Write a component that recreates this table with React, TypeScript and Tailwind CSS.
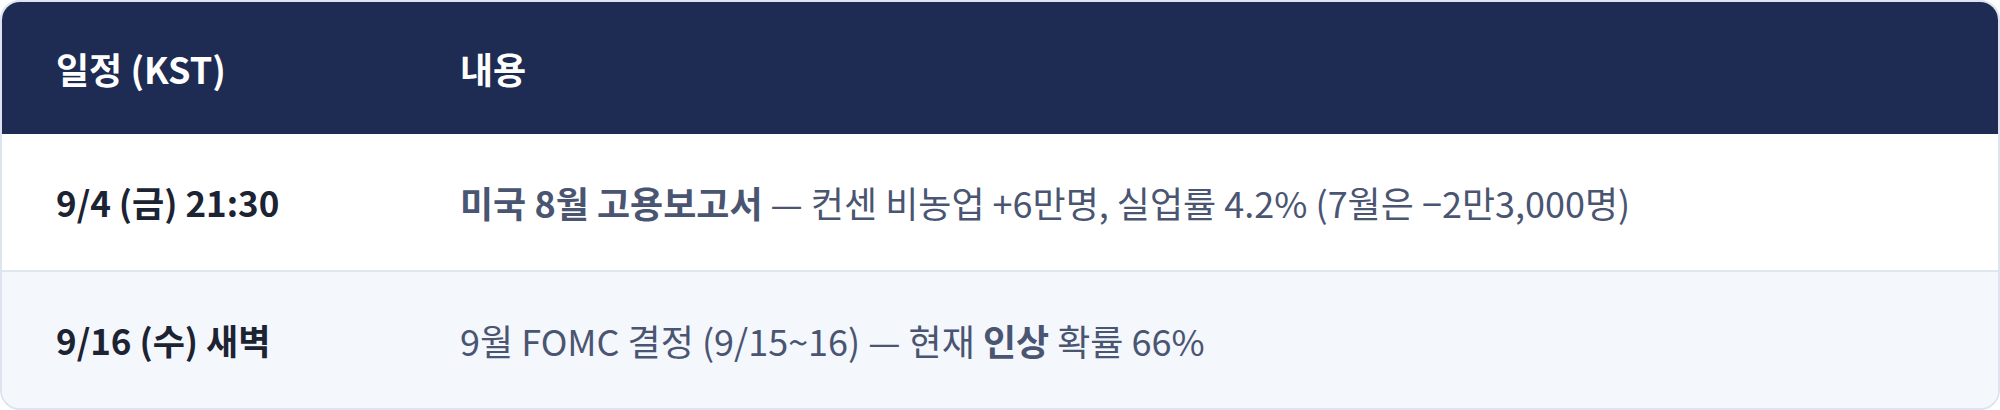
const rows = [
  {
    when: "9/4 (금) 21:30",
    body: (
      <>
        <b className="font-bold">미국 8월 고용보고서</b> — 컨센 비농업 +6만명, 실업률 4.2% (7월은 −2만3,000명)
      </>
    ),
    bg: "bg-white",
  },
  {
    when: "9/16 (수) 새벽",
    body: (
      <>
        9월 FOMC 결정 (9/15~16) — 현재 <b className="font-bold">인상</b> 확률 66%
      </>
    ),
    bg: "bg-[#f4f7fc]",
  },
];

export default function App() {
  return (
    <div
      className="w-[2000px] h-[410px] bg-white"
      style={{ fontFamily: '"Noto Sans CJK KR", "Noto Sans", sans-serif' }}
    >
      <div className="h-full rounded-[20px] border-2 border-[#dde4ef] overflow-hidden flex flex-col">
        {/* header */}
        <div className="h-[132px] bg-[#1e2b53] grid grid-cols-[404px_1fr] items-center pl-[54px] text-white font-bold text-[36px]">
          <div>일정 (KST)</div>
          <div>내용</div>
        </div>

        {rows.map((r, i) => (
          <div
            key={i}
            className={`h-[136px] grid grid-cols-[404px_1fr] items-center pl-[54px] ${r.bg} ${
              i > 0 ? "border-t-2 border-[#e0e6f0] h-[138px]" : ""
            }`}
          >
            <div className="font-bold text-[#1c2333] text-[35px]">{r.when}</div>
            <div className="text-[#4a5572] text-[36px]">{r.body}</div>
          </div>
        ))}
      </div>
    </div>
  );
}
